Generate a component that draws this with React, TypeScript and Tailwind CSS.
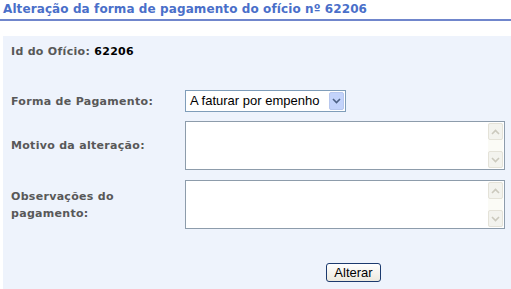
import React from "react";

function Chevron({ up, color }: { up?: boolean; color: string }) {
  return (
    <svg width="9" height="6" viewBox="0 0 9 6">
      <path
        d={up ? "M1 5 L4.5 1.5 L8 5" : "M1 1 L4.5 4.5 L8 1"}
        fill="none"
        stroke={color}
        strokeWidth="1.6"
      />
    </svg>
  );
}

function FakeTextarea() {
  return (
    <div className="w-[320px] h-[49px] border border-[#8d9cab] bg-white flex justify-end p-[1px]">
      <div className="w-[15px] h-full bg-[#fbfbf6] flex flex-col justify-between">
        <div className="h-[17px] bg-[#f3f3ee] border border-[#e4e2d8] rounded-[2px] flex items-center justify-center">
          <Chevron up color="#cbc9bd" />
        </div>
        <div className="h-[17px] bg-[#f3f3ee] border border-[#e4e2d8] rounded-[2px] flex items-center justify-center">
          <Chevron color="#cbc9bd" />
        </div>
      </div>
    </div>
  );
}

export default function App() {
  const label =
    "text-[11px] font-bold text-[#585858] leading-[16px] tracking-[0.3px] font-['DejaVu_Sans',sans-serif]";
  return (
    <div className="w-[511px] h-[289px] bg-white overflow-hidden font-['DejaVu_Sans',sans-serif]">
      <div className="pl-[3px] pt-[2px] h-[17px] text-[12px] leading-[15px] font-bold tracking-[0.1px] text-[#4a6fc9] whitespace-nowrap">
        Alteração da forma de pagamento do ofício nº 62206
      </div>
      <div className="mt-[2px] h-[2px] bg-[#7086cc]" />
      <div className="mt-[15px] ml-[3px] h-[253px] bg-[#eef3fc] pl-[8px] pt-[8px]">
        <div className={label + " h-[16px] whitespace-nowrap"}>
          Id do Ofício: <span className="text-black">62206</span>
        </div>
        <div className="mt-[30px] flex items-center h-[22px]">
          <div className={label + " w-[174px] shrink-0 pt-[2px]"}>Forma de Pagamento:</div>
          <div className="w-[161px] h-[22px] border border-[#7f9db9] bg-white flex items-center justify-between pl-[4px] pr-[1px]">
            <span className="text-[13px] text-black font-['Liberation_Sans',sans-serif] leading-[16px] whitespace-nowrap">
              A faturar por empenho
            </span>
            <div className="w-[15px] h-[18px] bg-[#c3d3fb] border border-[#b7c7ee] rounded-[2px] flex items-center justify-center">
              <Chevron color="#4d6185" />
            </div>
          </div>
        </div>
        <div className="mt-[9px] flex items-center">
          <div className={label + " w-[174px] shrink-0"}>Motivo da alteração:</div>
          <FakeTextarea />
        </div>
        <div className="mt-[10px] flex items-center">
          <div className={label + " w-[174px] shrink-0 leading-[17px]"}>
            Observações do
            <br />
            pagamento:
          </div>
          <FakeTextarea />
        </div>
        <div className="mt-[34px] flex">
          <div className="w-[174px] shrink-0" />
          <div className="pl-[141px]">
            <button className="w-[55px] h-[19px] border border-[#1c3a6e] rounded-[3px] bg-gradient-to-b from-white to-[#ece9de] text-[13px] leading-[16px] text-black font-['Liberation_Sans',sans-serif] flex items-center justify-center">
              Alterar
            </button>
          </div>
        </div>
      </div>
    </div>
  );
}
